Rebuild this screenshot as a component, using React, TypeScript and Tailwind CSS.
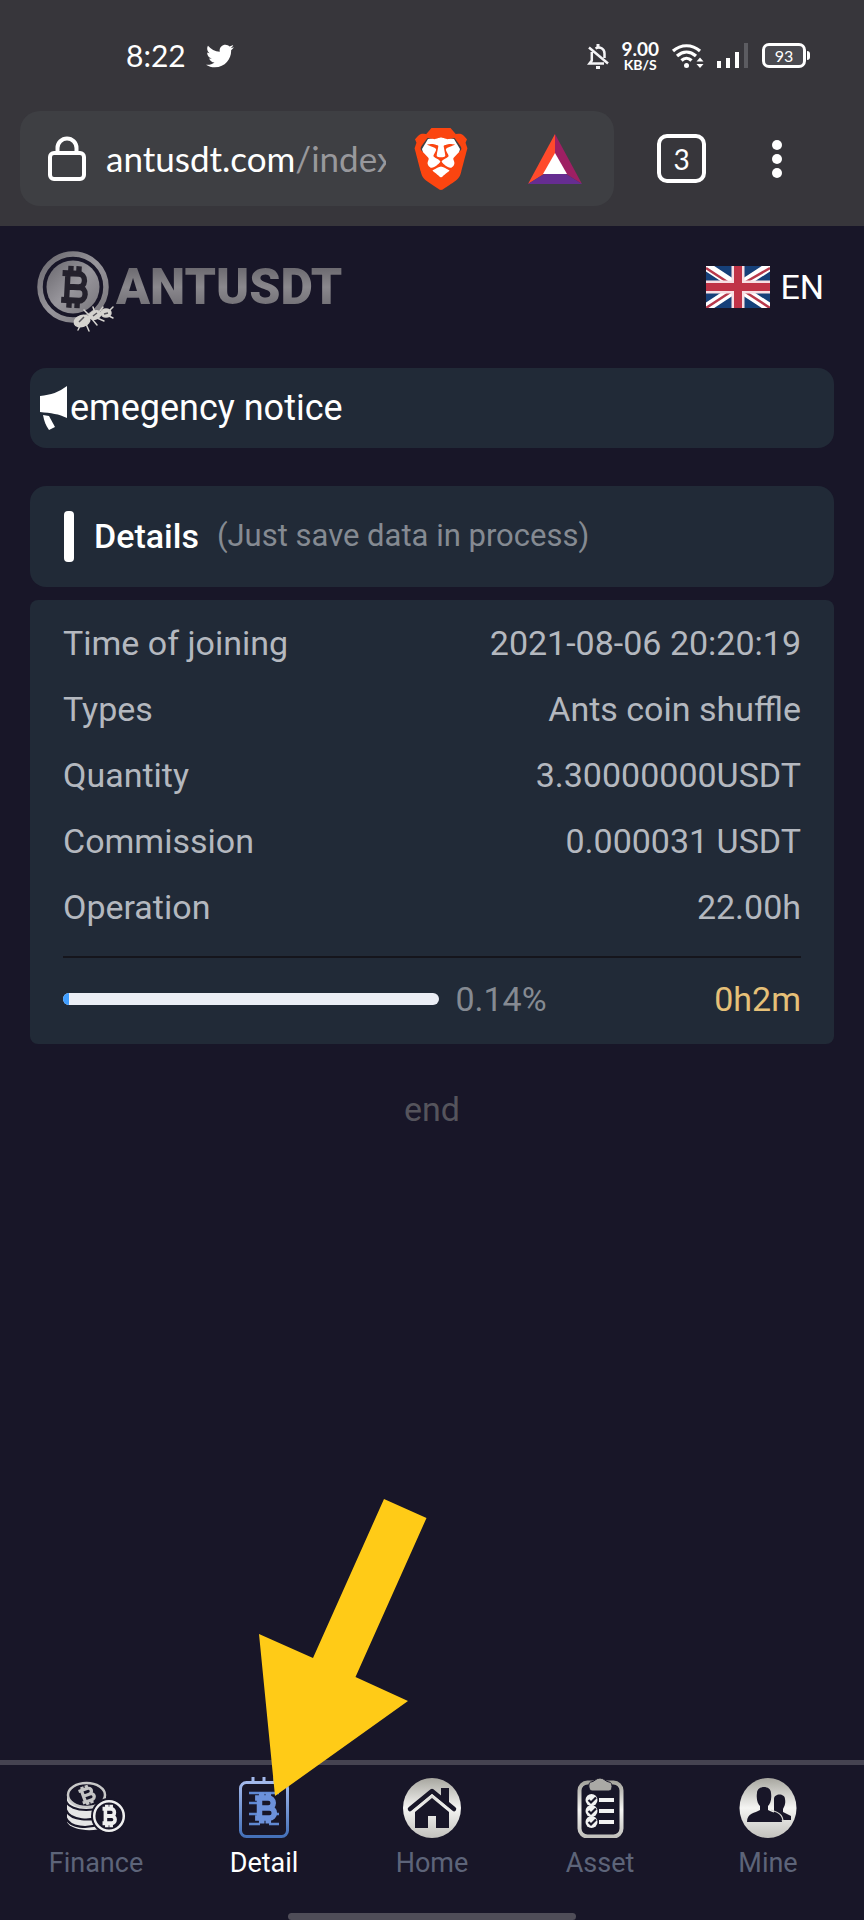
import type { ReactNode } from "react";
import { FaTwitter } from "react-icons/fa";
import { SiBrave } from "react-icons/si";

function BellOffIcon() {
  return (
    <svg viewBox="0 0 22 26" className="h-[26px] w-[22px]" fill="none" stroke="#f4f4f6" strokeWidth="2.500">
      <path d="M8.500 5.500C13 2.800 17.500 6 17.500 10.500v4.500M4.800 9v8.500L2.500 20.500H17M2 4.500l19 16" />
      <path d="M11 1v3M9 24.500h4" strokeWidth="3" />
    </svg>
  );
}

function WifiIcon() {
  return (
    <svg viewBox="0 0 34 26" className="h-[26px] w-[34px]" fill="none" stroke="#fff" strokeWidth="3.200">
      <path d="M2 8c8-7 19-7 27 0M6 13c6-5.300 13-5.300 19 0M10.500 17.500c3-3 7-3 10 0" />
      <circle cx="15.500" cy="22.500" r="2.500" fill="#fff" stroke="none" />
      <path d="M25.500 18.500l3.500-4 3.500 4zM25.500 21l3.500 4 3.500-4z" fill="#fff" stroke="none" />
    </svg>
  );
}

function SignalIcon() {
  return (
    <svg viewBox="0 0 31 25" className="h-[25px] w-[31px]" fill="#fff">
      <rect x="0" y="18" width="4" height="7" />
      <rect x="9" y="15" width="4" height="10" />
      <rect x="18" y="9" width="4" height="16" />
      <rect x="27" y="0" width="4" height="25" fill="#5c5c61" />
    </svg>
  );
}

function LockIcon() {
  return (
    <svg viewBox="0 0 38 46" className="h-[46px] w-[38px] shrink-0" fill="none" stroke="#fff" strokeWidth="4">
      <rect x="2" y="17" width="34" height="26" rx="4" />
      <path d="M9.500 17v-5a9.500 9.500 0 0 1 19 0v5" />
    </svg>
  );
}

function BatIcon() {
  return (
    <svg viewBox="0 0 54 50" className="h-[50px] w-[54px]">
      <path d="M27 0v20L16 40 0 50z" fill="#ff4a2b" />
      <path d="M27 0v20l11 20 16 10z" fill="#9e1f63" />
      <path d="M0 50l16-10h22l16 10z" fill="#662d91" />
      <path d="M27 19l12 21H15z" fill="#fff" />
    </svg>
  );
}

function BraveIcon() {
  return (
    <svg viewBox="0 0 54 64" className="h-[64px] w-[54px]">
      <path d="M14 12l13-2 13 2 6 10-6 22-13 10-13-10-6-22z" fill="#fff" />
      <g transform="translate(-4 1)">
        <SiBrave size={62} color="#fb4510" />
      </g>
    </svg>
  );
}

/* Bitcoin mark drawn in a 22x28 box centred on the origin. */
function BitcoinMark({ color, weight, transform }: { color: string; weight: number; transform: string }) {
  return (
    <g transform={transform} fill="none" stroke={color} strokeWidth={weight}>
      <path d="M-9-9H3a4.500 4.500 0 0 1 0 9H-4M-5-9V9M3 0h1a4.500 4.500 0 0 1 0 9H-9" />
      <path d="M-3-14v5M3-14v5M-3 9v5M3 9v5" />
    </g>
  );
}

function CoinLogo() {
  return (
    <svg viewBox="0 -10 80 94" className="h-[94px] w-[80px]">
      <defs>
        <linearGradient id="coin" x1="0" y1="0" x2="1" y2="1">
          <stop offset="0" stopColor="#68666c" />
          <stop offset="0.500" stopColor="#98969c" />
          <stop offset="1" stopColor="#77757b" />
        </linearGradient>
      </defs>
      <circle cx="37" cy="37" r="33" fill="none" stroke="url(#coin)" strokeWidth="5.500" />
      <circle cx="37" cy="37" r="26.500" fill="url(#coin)" />
      <BitcoinMark color="#24212c" weight={4} transform="translate(38 37) rotate(3) scale(1.350 1.500)" />
      <g fill="#d5d3cf" stroke="#d5d3cf" strokeWidth="1.500" strokeLinecap="round">
        <ellipse cx="46" cy="71" rx="8" ry="5.500" transform="rotate(-20 46 71)" />
        <ellipse cx="59" cy="65" rx="6" ry="4" transform="rotate(-20 59 65)" />
        <ellipse cx="70" cy="63" rx="5" ry="4" />
        <path d="M54 66l-6-6M59 63l-2-6M63 62l4-5M74 60l3-3M56 69l5 6M61 68l7 3M50 74l3 7M44 76l-2 4M73 66l4 2" fill="none" />
      </g>
      <path d="M43 72l5-5M57 66l4-3M68 64l4-1" stroke="#55535a" strokeWidth="1.500" />
    </svg>
  );
}

function FlagIcon() {
  return (
    <svg viewBox="0 0 64 42" className="h-[42px] w-[64px]">
      <rect width="64" height="42" fill="#164079" />
      <path d="M0 0l64 42M64 0L0 42" stroke="#fff" strokeWidth="9" />
      <path d="M0 2l26 17M64 2L38 17M0 42l26-17M64 42L38 25" stroke="#b8394c" strokeWidth="2.500" />
      <path d="M32 0v42M0 21h64" stroke="#f7dfe4" strokeWidth="13" />
      <path d="M32 0v42M0 21h64" stroke="#c03347" strokeWidth="8" />
    </svg>
  );
}

function MegaphoneIcon() {
  return (
    <svg viewBox="0 0 30 46" className="h-[46px] w-[30px] shrink-0" fill="#fff">
      <path d="M0 11C11 10 19 7 27 1v32C19 29 11 28 0 27z" />
      <path d="M3 30l6 1 6 11-6 3c-3-4-5-9-6-15z" />
    </svg>
  );
}

function Silver({ id }: { id: string }) {
  return (
    <defs>
      <linearGradient id={id} x1="0" y1="0" x2="0" y2="1">
        <stop offset="0" stopColor="#a7a69f" />
        <stop offset="0.500" stopColor="#f5f5f3" />
        <stop offset="1" stopColor="#c2c1bd" />
      </linearGradient>
    </defs>
  );
}

function FinanceIcon() {
  return (
    <svg viewBox="0 0 60 60" className="size-[60px]">
      <path d="M1 18v26c3 8 27 11 37 5l2-31z" fill="#e6e6e6" />
      <path d="M0 23c4 12 36 12 41 0M0 32c4 11 26 12 36 5M0 40c4 10 22 11 33 6" fill="none" stroke="#181628" strokeWidth="2.200" />
      <ellipse cx="20.500" cy="17" rx="18.500" ry="12" fill="#181628" stroke="#c8c8c8" strokeWidth="2.500" />
      <BitcoinMark color="#c4c4c4" weight={4.500} transform="translate(21 17) rotate(-20) scale(0.750 0.680)" />
      <circle cx="43" cy="38" r="18" fill="#181628" />
      <circle cx="43" cy="38" r="14.800" fill="#181628" stroke="#efefef" strokeWidth="2.500" />
      <BitcoinMark color="#efefef" weight={5} transform="translate(43 38) scale(0.720 0.800)" />
    </svg>
  );
}

function DetailIcon() {
  return (
    <svg viewBox="0 0 60 64" className="h-[64px] w-[60px]">
      <defs>
        <linearGradient id="blue" x1="0" y1="0" x2="0" y2="1">
          <stop offset="0" stopColor="#a3b9ec" />
          <stop offset="1" stopColor="#4470b8" />
        </linearGradient>
      </defs>
      <rect x="6.500" y="6.500" width="47" height="54" rx="6" fill="none" stroke="url(#blue)" strokeWidth="3" />
      <path d="M19 1v6M30 1v6M41 1v6" stroke="#a3b9ec" strokeWidth="3" />
      <path d="M15 17h30M15 27h13M15 38h12M15 48h11M35 48h10M40 38h5" stroke="#5f88d2" strokeWidth="2.500" />
      <BitcoinMark color="#6c91db" weight={5} transform="translate(31 32) scale(1.100 1.100)" />
    </svg>
  );
}

function HomeIcon() {
  return (
    <svg viewBox="0 0 60 60" className="size-[60px]">
      <Silver id="home" />
      <ellipse cx="30" cy="30" rx="29" ry="30" fill="url(#home)" />
      <path d="M13 34l17-14 17 14v16H34V38h-8v12H13z" fill="#181628" />
      <path d="M39 10h8v16l-8-7z" fill="#181628" />
      <path d="M8 31l22-18 22 18" fill="none" stroke="#181628" strokeWidth="4.500" strokeLinecap="round" strokeLinejoin="round" />
      <path d="M12 32l18-15 18 15" fill="none" stroke="#e8e8e4" strokeWidth="1.500" />
    </svg>
  );
}

function AssetIcon() {
  return (
    <svg viewBox="0 0 60 60" className="size-[60px]">
      <Silver id="asset" />
      <rect x="9.500" y="4.500" width="42" height="54" rx="8" fill="#181628" stroke="url(#asset)" strokeWidth="4" />
      <path d="M21 4c3 0 5-4 9-4s6 4 9 4c4 0 4 9 0 9H22c-4 0-4-9-1-9z" fill="#aaa9a5" stroke="#181628" />
      {[22, 33, 44].map((y) => (
        <g key={y}>
          <circle cx="21.500" cy={y} r="6" fill="#f2f2f2" />
          <path d={`M18.500 ${y}l2.500 2.500 5-5`} fill="none" stroke="#181628" strokeWidth="2.200" />
          <path d={`M29 ${y}h15`} stroke="#f2f2f2" strokeWidth="4" />
        </g>
      ))}
    </svg>
  );
}

function MineIcon() {
  return (
    <svg viewBox="0 0 60 60" className="size-[60px]">
      <Silver id="mine" />
      <ellipse cx="30" cy="30" rx="28.500" ry="30" fill="url(#mine)" />
      <path d="M36 21c0-6 11-6 11 0 1 5-1 8-2 10v3l8 4v4H36V24z" fill="#181628" />
      <path d="M19 15c0-8 14-8 14 0 1 7-1 11-3 13v4c5 3 14 3 14 12H9c0-9 8-9 13-12v-4c-2-2-4-6-3-13z" fill="#181628" />
      <path d="M33 32c5 2 12 3 12 12" fill="none" stroke="#d5d5d0" strokeWidth="1.200" />
    </svg>
  );
}

function PointerArrow() {
  return (
    <svg viewBox="0 0 168 297" className="h-[297px] w-[168px]">
      <path d="M125 0l42.500 19-71 159 52.500 24L16 297 0 135l54 24z" fill="#ffcb17" />
    </svg>
  );
}

const details = [
  ["Time of joining", "2021-08-06 20:20:19"],
  ["Types", "Ants coin shuffle"],
  ["Quantity", "3.30000000USDT"],
  ["Commission", "0.000031 USDT"],
  ["Operation", "22.00h"],
];

const tabs: { label: string; icon: ReactNode; active?: boolean }[] = [
  { label: "Finance", icon: <FinanceIcon /> },
  { label: "Detail", icon: <DetailIcon />, active: true },
  { label: "Home", icon: <HomeIcon /> },
  { label: "Asset", icon: <AssetIcon /> },
  { label: "Mine", icon: <MineIcon /> },
];

function StatusBar() {
  return (
    <div className="flex h-[111px] items-center pr-[54px] pl-[126px] font-['Lato',sans-serif] text-white">
      <span className="text-[30px]">8:22</span>
      <FaTwitter className="ml-5 size-[28px]" />
      <div className="ml-auto flex items-center">
        <BellOffIcon />
        <div className="ml-3 flex flex-col items-center font-bold">
          <span className="text-[19px] leading-[17px]">9.00</span>
          <span className="text-[14px] leading-[15px]">KB/S</span>
        </div>
        <span className="ml-3"><WifiIcon /></span>
        <span className="ml-3"><SignalIcon /></span>
        <div className="ml-[14px] flex items-center gap-px">
          <span className="flex h-[25px] w-[44px] items-center justify-center rounded-[7px] border-[3px] border-white bg-[#4a4a50] text-[16px]">93</span>
          <span className="h-[9px] w-[3px] rounded-r bg-white" />
        </div>
      </div>
    </div>
  );
}

function BrowserBar() {
  return (
    <div className="flex items-center pr-[82px] pb-5 pl-5">
      <div className="flex h-[95px] min-w-0 flex-1 items-center rounded-[20px] bg-[#3e3f43] pr-8 pl-7">
        <LockIcon />
        <button
          type="button"
          aria-label="Address"
          className="ml-5 min-w-0 flex-1 overflow-hidden text-left font-['Lato',sans-serif] text-[35px] whitespace-nowrap text-white"
        >
          antusdt.com<span className="text-[#98989c]">/index</span>
        </button>
        <button type="button" aria-label="Brave Shields" className="ml-7 shrink-0"><BraveIcon /></button>
        <button type="button" aria-label="Rewards" className="ml-[60px] shrink-0"><BatIcon /></button>
      </div>
      <button
        type="button"
        aria-label="3 open tabs"
        className="ml-[43px] flex size-[49px] shrink-0 items-center justify-center rounded-[10px] border-4 border-white font-['Lato',sans-serif] text-[28px] text-white"
      >
        3
      </button>
      <button type="button" aria-label="Menu" className="ml-[66px] flex shrink-0 flex-col gap-1 py-2">
        <span className="size-[10px] rounded-full bg-white" />
        <span className="size-[10px] rounded-full bg-white" />
        <span className="size-[10px] rounded-full bg-white" />
      </button>
    </div>
  );
}

export default function App() {
  return (
    <div className="flex min-h-screen flex-col bg-[#181628] font-['Roboto',sans-serif] text-[34px] text-white">
      <header className="bg-[#37363b]">
        <StatusBar />
        <BrowserBar />
      </header>

      <main className="flex-1 px-[30px]">
        <div className="flex h-[142px] items-center justify-between pr-[10px] pb-5 pl-[6px]">
          <div className="flex items-center">
            <CoinLogo />
            <h1 className="bg-linear-to-b from-[#5c5a60] via-[#8a888d] to-[#66646a] bg-clip-text text-[50px] leading-[60px] font-black text-transparent">
              ANTUSDT
            </h1>
          </div>
          <button type="button" className="flex items-center gap-[10px]">
            <FlagIcon />
            EN
          </button>
        </div>

        <section className="flex h-[80px] items-center rounded-2xl bg-[#212a37] px-[10px]">
          <MegaphoneIcon />
          <p className="text-[36px]">emegency notice</p>
        </section>

        <section className="mt-[38px] flex h-[101px] items-center rounded-2xl bg-[#212a37] px-[34px]">
          <span className="h-[51px] w-[10px] rounded bg-white" />
          <h2 className="ml-5 font-medium">Details</h2>
          <p className="ml-[18px] text-[31px] text-[#858a92]">(Just save data in process)</p>
        </section>

        <section className="mt-[13px] rounded-lg bg-[#212a37] px-[33px] pt-[10px] pb-1">
          <dl>
            {details.map(([name, value]) => (
              <div key={name} className="flex h-[66px] items-center justify-between text-[#b4b8bf]">
                <dt>{name}</dt>
                <dd>{value}</dd>
              </div>
            ))}
          </dl>
          <div className="mt-4 h-[2px] bg-[#15151c]" />
          <div className="flex h-[82px] items-center">
            <div
              role="progressbar"
              aria-label="Progress"
              aria-valuenow={0.14}
              aria-valuemin={0}
              aria-valuemax={100}
              className="h-3 w-[51%] overflow-hidden rounded-full bg-[#ebeef5]"
            >
              <div className="h-full min-w-[6px] bg-[#409eff]" style={{ width: "0.14%" }} />
            </div>
            <span className="ml-4 text-[#858a92]">0.14%</span>
            <span className="ml-auto text-[#e6c078]">0h2m</span>
          </div>
        </section>

        <p className="pt-10 text-center text-[#55545c]">end</p>
      </main>

      <nav className="border-t-[5px] border-[#454351] px-3">
        <ul className="flex pt-[10px]">
          {tabs.map(({ label, icon, active }) => (
            <li key={label} className="relative flex-1">
              <a
                href={`#${label.toLowerCase()}`}
                className={active ? "flex flex-col items-center text-white" : "flex flex-col items-center text-[#5d6479]"}
              >
                <span className="flex h-[66px] items-center">{icon}</span>
                <span className="mt-1 text-[27px] leading-[36px]">{label}</span>
              </a>
              {active && (
                <div className="pointer-events-none absolute bottom-[85px] left-[79px]">
                  <PointerArrow />
                </div>
              )}
            </li>
          ))}
        </ul>
        <div className="mx-auto mt-8 h-[7px] w-[288px] rounded-full bg-[#4f4d58]" />
      </nav>
    </div>
  );
}
